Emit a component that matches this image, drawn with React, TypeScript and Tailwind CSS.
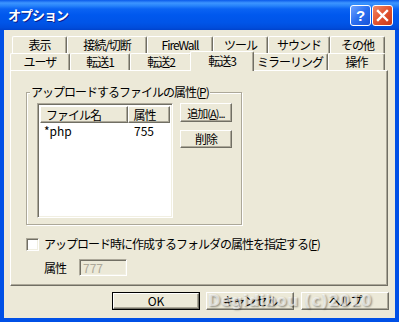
import React from "react";

const raised =
  "border border-t-white border-l-white border-r-[#716F64] border-b-[#716F64] shadow-[inset_-1px_-1px_0_#ACA899]";
const sunken =
  "border border-t-[#ACA899] border-l-[#ACA899] border-r-white border-b-white shadow-[inset_1px_1px_0_#716F64,inset_-1px_-1px_0_#F1EFE2]";

function Tab({ label, w, selected }: { label: string; w: number; selected?: boolean }) {
  if (selected) {
    return (
      <div
        className="relative z-10 -mx-[2px] -mt-[2px] flex h-[20px] shrink-0 items-start justify-center border-l border-r border-t border-l-white border-t-white border-r-[#716F64] bg-[#ECE9D8] pt-[2px] shadow-[inset_-1px_0_0_#ACA899] rounded-t-[2px] tracking-[-1px]"
        style={{ width: w + 4 }}
      >
        {label}
      </div>
    );
  }
  return (
    <div
      className="flex h-[17px] shrink-0 items-center justify-center border-l border-r border-t border-l-white border-t-white border-r-[#716F64] bg-[#ECE9D8] shadow-[inset_-1px_0_0_#ACA899] rounded-t-[2px] tracking-[-1px]"
      style={{ width: w }}
    >
      {label}
    </div>
  );
}

export default function App() {
  return (
    <div className="relative flex h-[322px] w-[399px] flex-col overflow-hidden bg-[#0050E6] font-['Noto_Sans_CJK_JP',sans-serif] text-[12px] leading-[14px] text-black">
      {/* title bar */}
      <div className="flex h-[30px] shrink-0 items-center bg-[linear-gradient(to_bottom,#0A5AEA_0%,#3D95FF_10%,#2A86FB_18%,#0A63F3_30%,#0058EE_50%,#0055E8_75%,#004DDC_92%,#0043CD_100%)] pl-[8px] pr-[6px]">
        <div className="flex-1 text-[13px] font-bold tracking-[-1px] text-white [text-shadow:1px_1px_0_#0A1E8C]">
          オプション
        </div>
        <div className="flex h-[21px] w-[21px] items-center justify-center rounded-[3px] border border-white bg-[linear-gradient(135deg,#6FA3FF_0%,#2A6FF0_50%,#1752D8_100%)] text-[15px] font-bold leading-none text-white font-['Liberation_Sans',sans-serif]">
          ?
        </div>
        <div className="ml-[1px] flex h-[21px] w-[21px] items-center justify-center rounded-[3px] border border-white bg-[linear-gradient(135deg,#F08A6A_0%,#E2532F_50%,#C8381A_100%)]">
          <svg width="13" height="13" viewBox="0 0 13 13">
            <path d="M2 2 L11 11 M11 2 L2 11" stroke="white" strokeWidth="2.4" strokeLinecap="square" />
          </svg>
        </div>
      </div>

      {/* body with side frames */}
      <div className="flex min-h-0 flex-1 px-[4px] pb-[4px]">
        <div className="flex flex-1 flex-col bg-[#ECE9D8] pt-[6px]">
          {/* tabs */}
          <div className="relative flex h-[34px] shrink-0 flex-col">
            <div className="flex h-[17px] pl-[8px]">
              <Tab label="表示" w={55} />
              <Tab label="接続/切断" w={80} />
              <Tab label="FireWall" w={66} />
              <Tab label="ツール" w={55} />
              <Tab label="サウンド" w={62} />
              <Tab label="その他" w={55} />
            </div>
            <div className="flex h-[17px] pl-[6px]">
              <Tab label="ユーザ" w={60} />
              <Tab label="転送1" w={60} />
              <Tab label="転送2" w={62} />
              <Tab label="転送3" w={60} selected />
              <Tab label="ミラーリング" w={76} />
              <Tab label="操作" w={57} />
            </div>
          </div>

          {/* panel */}
          <div className={`ml-[6px] flex h-[216px] w-[378px] shrink-0 flex-col ${raised}`}>
            {/* group box */}
            <div className="relative ml-[15px] mt-[21px] flex h-[133px] w-[216px] border border-[#ACA899] p-[10px] shadow-[inset_1px_1px_0_white,1px_1px_0_white]">
              <div className="absolute -top-[8px] left-[3px] bg-[#ECE9D8] px-[1px] tracking-[-1px]">
                アップロードするファイルの属性(<span className="underline">P</span>)
              </div>
              {/* listview */}
              <div className={`flex h-[115px] w-[136px] flex-col bg-white ${sunken} p-[2px]`}>
                <div className="flex h-[17px] shrink-0">
                  <div className={`flex w-[89px] items-center bg-[#ECE9D8] pl-[5px] tracking-[-1px] ${raised}`}>ファイル名</div>
                  <div className={`flex w-[43px] items-center bg-[#ECE9D8] pl-[5px] tracking-[-1px] ${raised}`}>属性</div>
                </div>
                <div className="flex h-[16px] items-center">
                  <div className="w-[89px] pl-[4px]">*php</div>
                  <div className="pl-[5px]">755</div>
                </div>
              </div>
              {/* side buttons */}
              <div className="ml-[7px] flex flex-col">
                <div className={`flex h-[19px] w-[52px] items-center justify-center bg-[#ECE9D8] text-[11px] tracking-[-1px] ${raised}`}>
                  追加(<span className="underline">A</span>)...
                </div>
                <div className={`mt-[8px] flex h-[18px] w-[52px] items-center justify-center bg-[#ECE9D8] tracking-[-1px] ${raised}`}>
                  削除
                </div>
              </div>
            </div>

            {/* checkbox row */}
            <div className="ml-[15px] mt-[12px] flex items-center">
              <div className={`h-[13px] w-[13px] bg-white ${sunken}`} />
              <div className="ml-[5px] tracking-[-1px]">
                アップロード時に作成するフォルダの属性を指定する(<span className="underline">F</span>)
              </div>
            </div>

            {/* attribute row */}
            <div className="ml-[33px] mt-[8px] flex items-center">
              <div className="w-[35px] tracking-[-1px]">属性</div>
              <div className={`flex h-[17px] w-[48px] items-center bg-[#ECE9D8] pl-[3px] text-[#ACA899] ${sunken}`}>777</div>
            </div>
          </div>

          {/* bottom buttons */}
          <div className="relative ml-[108px] mt-[6px] flex">
            <div className="flex h-[18px] w-[88px] items-center justify-center border border-black bg-[#ECE9D8]">
              <div className={`flex h-full w-full items-center justify-center ${raised}`}>OK</div>
            </div>
            <div className={`ml-[6px] flex h-[18px] w-[88px] items-center justify-center bg-[#ECE9D8] tracking-[-1px] ${raised}`}>キャンセル</div>
            <div className={`ml-[7px] flex h-[18px] w-[88px] items-center justify-center bg-[#ECE9D8] tracking-[-1px] ${raised}`}>ヘルプ</div>
            <div className="pointer-events-none absolute -top-[1px] left-[96px] whitespace-nowrap font-['DejaVu_Sans',sans-serif] text-[15px] font-bold leading-[20px] tracking-[0.5px] text-white/60 [text-shadow:1px_1px_2px_rgba(0,0,0,0.4)]">
              Degidibou (c)2010
            </div>
          </div>
        </div>
      </div>
    </div>
  );
}
